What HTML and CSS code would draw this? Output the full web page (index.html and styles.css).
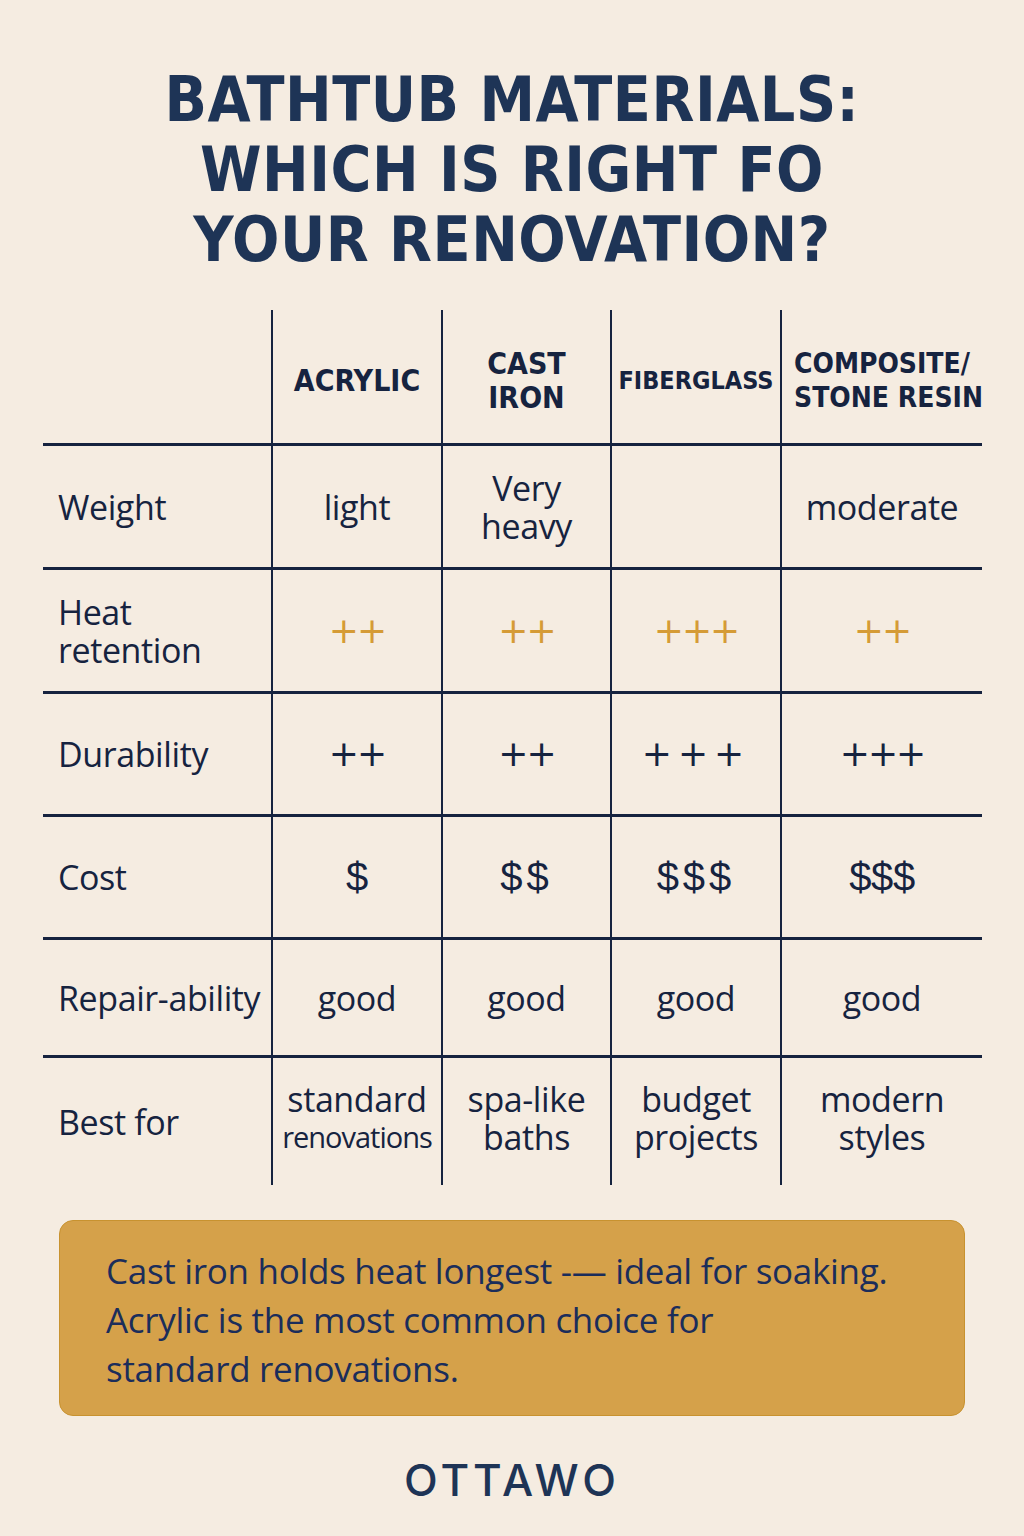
FILE: index.html
```html
<!DOCTYPE html>
<html lang="en">
<head>
<meta charset="utf-8">
<title>Bathtub Materials</title>
<link rel="stylesheet" href="styles.css">
</head>
<body>
<main class="page">
  <h1 class="title">BATHTUB MATERIALS:<br>WHICH IS RIGHT FO<br>YOUR RENOVATION?</h1>

  <div class="table">
    <div class="cell head label"></div>
    <div class="cell head col">ACRYLIC</div>
    <div class="cell head col">CAST<br>IRON</div>
    <div class="cell head col small">FIBERGLASS</div>
    <div class="cell head col left">COMPOSITE/<br>STONE RESIN</div>

    <div class="cell label">Weight</div>
    <div class="cell col">light</div>
    <div class="cell col">Very<br>heavy</div>
    <div class="cell col"></div>
    <div class="cell col">moderate</div>

    <div class="cell label">Heat<br>retention</div>
    <div class="cell col plus gold">++</div>
    <div class="cell col plus gold">++</div>
    <div class="cell col plus gold">+++</div>
    <div class="cell col plus gold">++</div>

    <div class="cell label">Durability</div>
    <div class="cell col plus">++</div>
    <div class="cell col plus">++</div>
    <div class="cell col plus wide">+++</div>
    <div class="cell col plus">+++</div>

    <div class="cell label">Cost</div>
    <div class="cell col money">$</div>
    <div class="cell col money spaced">$$</div>
    <div class="cell col money spaced">$$$</div>
    <div class="cell col money">$$$</div>

    <div class="cell label">Repair-ability</div>
    <div class="cell col">good</div>
    <div class="cell col">good</div>
    <div class="cell col">good</div>
    <div class="cell col">good</div>

    <div class="cell label last">Best for</div>
    <div class="cell col last two"><span>standard</span><span class="tight">renovations</span></div>
    <div class="cell col last two"><span>spa-like</span><span>baths</span></div>
    <div class="cell col last two"><span>budget</span><span>projects</span></div>
    <div class="cell col last two"><span>modern</span><span>styles</span></div>
  </div>

  <div class="note">
    <p>Cast iron holds heat longest -— ideal for soaking.<br>Acrylic is the most common choice for<br>standard renovations.</p>
  </div>

  <div class="logo">OTTAWO</div>
</main>
</body>
</html>
```

FILE: styles.css
```css
* { box-sizing: border-box; }

html, body {
  margin: 0;
  padding: 0;
  background: #f5ece1;
}

.page {
  width: 1024px;
  min-height: 1536px;
  padding-top: 65px;
  color: #1b2f50;
  font-family: "Open Sans", "Noto Sans", sans-serif;
}

.title {
  margin: 0;
  text-align: center;
  font-family: "DejaVu Sans Condensed", "DejaVu Sans", sans-serif;
  font-stretch: condensed;
  font-weight: 700;
  font-size: 62px;
  line-height: 70px;
  letter-spacing: 0.5px;
  color: #1e3456;
}

.table {
  margin: 35px 0 0 43px;
  width: 939px;
  display: grid;
  grid-template-columns: 228px 170px 169px 170px 202px;
  grid-template-rows: 136px 124px 124px 123px 123px 118px 127px;
}

.cell {
  display: flex;
  align-items: center;
  border-bottom: 3px solid #16233f;
  font-size: 34px;
  line-height: 38px;
  color: #16233f;
  letter-spacing: -0.4px;
  white-space: nowrap;
}

.cell.last { border-bottom: none; }

.cell.head { padding-top: 8px; }

.label {
  padding-left: 15px;
}

.col {
  justify-content: center;
  text-align: center;
  border-left: 2px solid #16233f;
}

.head.col {
  font-family: "DejaVu Sans Condensed", "DejaVu Sans", sans-serif;
  font-stretch: condensed;
  font-weight: 700;
  font-size: 30px;
  line-height: 34px;
  letter-spacing: 0;
}

.head.col.small { font-size: 25px; }

.head.col.left {
  justify-content: flex-start;
  text-align: left;
  padding-left: 12px;
  font-size: 28px;
}

.plus {
  font-family: "DejaVu Sans", sans-serif;
  font-weight: 500;
  font-size: 36px;
  letter-spacing: -2px;
}

.plus.wide { letter-spacing: 6px; }

.gold { color: #d59b36; }

.money {
  font-size: 40px;
  font-family: "Liberation Sans", sans-serif;
}

.money.spaced { letter-spacing: 4px; }

.two {
  flex-direction: column;
  justify-content: center;
  line-height: 38px;
  padding-bottom: 8px;
}

.two .tight {
  font-size: 29px;
  letter-spacing: -1px;
}

.note {
  margin: 35px 0 0 59px;
  width: 906px;
  height: 196px;
  background: #d5a14a;
  border: 1px solid #c8922f;
  border-radius: 14px;
  padding: 25px 20px 0 46px;
}

.note p {
  margin: 0;
  font-size: 35px;
  line-height: 49px;
  color: #1b2d5a;
  letter-spacing: -0.3px;
}

.logo {
  margin-top: 39px;
  text-align: center;
  font-family: "Inter", "Lato", sans-serif;
  font-weight: 500;
  font-size: 44px;
  line-height: 50px;
  letter-spacing: 4px;
  color: #1e3456;
}
```
